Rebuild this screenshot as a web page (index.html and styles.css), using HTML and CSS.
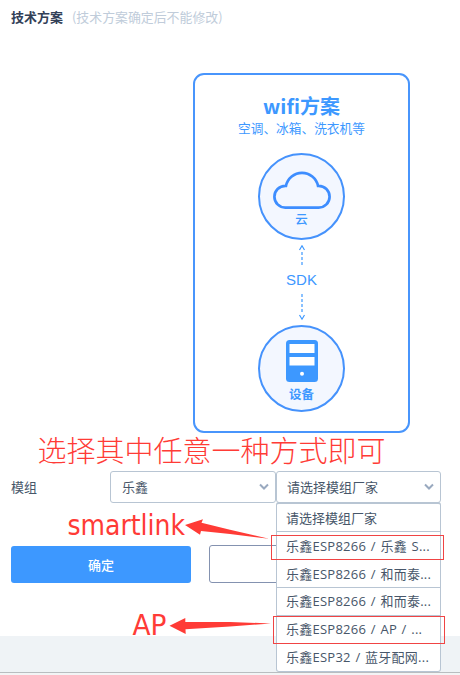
FILE: index.html
```html
<!DOCTYPE html>
<html lang="zh-CN">
<head>
<meta charset="utf-8">
<title>技术方案</title>
<link rel="stylesheet" href="styles.css">
</head>
<body>
<main class="page">
  <header class="heading"><h1>技术方案</h1><span class="hint">(技术方案确定后不能修改)</span></header>
  <section class="plan">
    <h2>wifi方案</h2>
    <p class="devices">空调、冰箱、洗衣机等</p>
    <div class="node">
      <svg class="cloud" width="58" height="40" viewBox="0 0 58 40"><path d="M12.300 37.600A10.900 10.900 0 0 1 12.300 15.800H13A16.350 16.350 0 0 1 45 15.800H45.700A10.900 10.900 0 0 1 45.700 37.600Z"/></svg>
      <span>云</span>
    </div>
    <svg class="link up" width="10" height="22" viewBox="0 0 10 22"><path d="M2.500 5L5 .8L7.500 5"/><path class="dash" d="M5 7V21"/></svg>
    <span class="sdk">SDK</span>
    <svg class="link down" width="10" height="28" viewBox="0 0 10 28"><path class="dash" d="M5 1V20"/><path d="M2.500 22L5 26.200L7.500 22"/></svg>
    <div class="node">
      <svg class="server" width="32" height="42" viewBox="0 0 32 42"><rect class="body" width="32" height="42" rx="3.500"/><path class="slot" d="M3.500 4H28.500V13H3.500ZM3.500 17H28.500V25.500H3.500Z"/><circle class="slot" cx="16" cy="33.700" r="2"/></svg>
      <span>设备</span>
    </div>
  </section>
  <form class="row">
    <label>模组</label>
    <div class="select"><span>乐鑫</span><svg width="12" height="8" viewBox="0 0 12 8"><path d="M2 1.500L6 5.500L10 1.500"/></svg></div>
    <div class="select"><span>请选择模组厂家</span><svg width="12" height="8" viewBox="0 0 12 8"><path d="M2 1.500L6 5.500L10 1.500"/></svg>
      <ul class="menu">
        <li>请选择模组厂家</li>
        <li class="module">乐鑫ESP8266 / 乐鑫 S...</li>
        <li class="module">乐鑫ESP8266 / 和而泰...</li>
        <li class="module">乐鑫ESP8266 / 和而泰...</li>
        <li class="module">乐鑫ESP8266 / AP / ...</li>
        <li class="module">乐鑫ESP32 / 蓝牙配网...</li>
      </ul>
    </div>
  </form>
  <div class="actions"><button class="primary" type="button">确定</button><button class="plain" type="button"></button></div>
  <footer class="footer"></footer>
  <svg class="notes" width="460" height="675" viewBox="0 0 460 675">
    <text class="song" x="37.500" y="462" textLength="348">选择其中任意一种方式即可</text>
    <text class="latin" x="67.500" y="535" textLength="117.500" lengthAdjust="spacingAndGlyphs">smartlink</text>
    <text class="latin" x="132.500" y="635" textLength="34" lengthAdjust="spacingAndGlyphs">AP</text>
    <path class="arrow" d="M185 525L203 519.300L201.500 522.700L230 529.700L269 538.700L230 534L201 531L200 534.700ZM169.500 625.700L185.300 618V622H230L271 623.400L230 626.500L185.500 629.300L185.700 634Z"/>
    <rect class="mark" x="271.500" y="535.500" width="172" height="24"/>
    <rect class="mark" x="273.500" y="616.500" width="171" height="27"/>
  </svg>
</main>
</body>
</html>
```
FILE: styles.css
```css
* { box-sizing: border-box; }
body {
  margin: 0;
  background: #fff;
  color: #475669;
  font: 13px/20px "Open Sans", "Noto Sans CJK SC", sans-serif;
}
.page {
  position: relative;
  display: flex;
  flex-direction: column;
  width: 460px;
  height: 675px;
  overflow: hidden;
}
.heading {
  display: flex;
  height: 73px;
  padding: 7px 0 0 11px;
  gap: 9px;
  font-family: "Noto Sans CJK SC", sans-serif;
}
h1, h2, p, ul { margin: 0; padding: 0; }
h1 { font-size: 13px; line-height: 20px; color: #324057; }
.hint { font-size: 12.9px; color: #c0ccda; }
.plan {
  display: flex;
  flex-direction: column;
  align-items: center;
  width: 217px;
  height: 360px;
  margin-left: 193px;
  padding-top: 19px;
  border: 2px solid #4895fc;
  border-radius: 11px;
  color: #3d98ff;
  font-family: "Noto Sans CJK SC", sans-serif;
}
.plan h2 { font-size: 20px; line-height: 24px; }
.devices { height: 35px; font-size: 12.7px; line-height: 20px; }
.node {
  display: flex;
  flex: none;
  flex-direction: column;
  align-items: center;
  width: 87px;
  height: 87px;
  border: 2px solid #4592fc;
  border-radius: 50%;
  background: #f3f7ff;
  font-size: 12.5px;
  font-weight: 700;
  line-height: 18px;
}
.cloud { margin-top: 15px; fill: none; stroke: #3d8dff; stroke-width: 2.7; }
.cloud + span { font-weight: 500; }
.server { margin-top: 13px; }
.server + span { margin-top: 3px; }
.body { fill: #3d98ff; }
.slot { fill: #fff; }
.link { flex: none; fill: none; stroke: #3d98ff; stroke-width: 1.2; }
.up { margin-top: 5px; }
.down { margin-top: 3px; margin-bottom: 4px; }
.dash { stroke-dasharray: 3 2; }
.sdk { margin-top: 3px; font: 15px/20px "Liberation Sans", sans-serif; }
.row { display: flex; height: 32px; margin-top: 38px; padding-left: 11px; }
.row label { width: 99px; line-height: 32px; }
.select {
  position: relative;
  display: flex;
  align-items: center;
  justify-content: space-between;
  width: 166px;
  height: 32px;
  padding: 0 5px 0 11px;
  border: 1px solid #b8c5d3;
  border-radius: 3px;
}
.select + .select { width: 165px; padding-left: 10px; }
.select svg { fill: none; stroke: #99a9bf; stroke-width: 2; }
.menu {
  position: absolute;
  z-index: 1;
  top: 30px;
  left: -1px;
  width: 165px;
  height: 170px;
  list-style: none;
  background: #fff;
  border: 1px solid #b8c5d3;
  border-top-width: 2px;
  border-radius: 3px;
}
.menu li {
  height: 28px;
  padding-left: 9px;
  line-height: 29px;
  border-bottom: 1px solid #b8c5d3;
  white-space: nowrap;
}
.menu .module { letter-spacing: .25px; word-spacing: 1px; }
.menu li:nth-child(n+4) { line-height: 27px; }
.menu li:last-child { border: 0; }
.actions { display: flex; gap: 18px; margin-top: 42px; padding-left: 11px; }
button { height: 38px; border-radius: 3px; font: 500 13px/36px "Noto Sans CJK SC", sans-serif; }
.primary { width: 180px; height: 37px; margin-top: 1px; padding: 0; border: 0; background: #3d98ff; color: #fff; }
.plain { width: 180px; border: 1px solid #8492b0; background: #fff; }
.footer { flex: none; height: 39px; margin-top: 53px; background: linear-gradient(#eff3f6 0 36px, #b9bdc0 36px 37px, #f3f4f5 37px); }
.notes { position: absolute; z-index: 2; inset: 0; pointer-events: none; }
.notes text { fill: #ff3b36; }
.song { font: 300 29px "Noto Sans CJK SC", sans-serif; }
.latin { font: 28.5px "DejaVu Sans Condensed", "DejaVu Sans", sans-serif; }
.arrow { fill: #ff3b36; }
.mark { fill: none; stroke: #f04444; }
```
